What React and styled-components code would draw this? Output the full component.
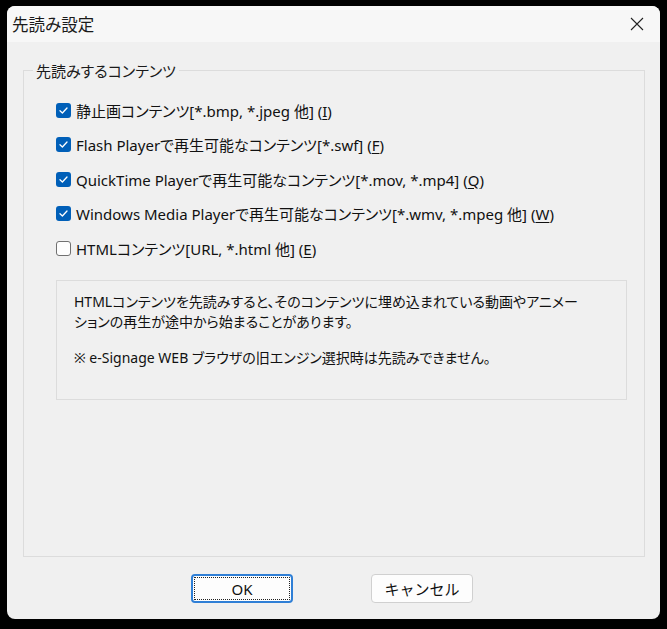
import React from 'react'
import styled, { createGlobalStyle } from 'styled-components'

const GlobalStyle = createGlobalStyle`
  html, body {
    margin: 0;
    padding: 0;
    background: #000;
  }
  body {
    font-family: "Noto Sans", "Noto Sans CJK JP", sans-serif;
    font-feature-settings: "palt";
  }
`

const Screen = styled.div`
  width: 667px;
  height: 629px;
  padding: 6px 7px 10px 7px;
  box-sizing: border-box;
`

const Window = styled.div`
  height: 100%;
  background: #f0f0f0;
  border-radius: 8px;
  display: flex;
  flex-direction: column;
  overflow: hidden;
`

const TitleBar = styled.div`
  height: 36px;
  display: flex;
  align-items: center;
  justify-content: space-between;
  padding: 0 14px 0 5px;
  background: #f7f7f7;
`

const Title = styled.span`
  font-size: 16.5px;
  color: #1a1a1a;
`

const CloseButton = styled.button`
  border: none;
  background: none;
  padding: 0;
  width: 18px;
  height: 18px;
  display: flex;
  align-items: center;
  justify-content: center;
`

const Body = styled.div`
  flex: 1;
  display: flex;
  flex-direction: column;
  padding: 18px 15px 16px 16px;
`

const Group = styled.fieldset`
  flex: 1;
  margin: 0;
  border: 1px solid #dcdcdc;
  padding: 12px 17px 0 9px;
  display: flex;
  flex-direction: column;
  min-height: 0;
`

const Legend = styled.legend`
  font-size: 15px;
  color: #1a1a1a;
  padding: 0 3px;
`

const Rows = styled.div`
  display: flex;
  flex-direction: column;
  padding-left: 23px;
`

const Row = styled.label`
  height: 34.5px;
  display: flex;
  align-items: center;
  gap: 5px;
  font-size: 15px;
  color: #111;
  white-space: nowrap;
`

const Box = styled.span`
  width: 15px;
  height: 15px;
  box-sizing: border-box;
  border-radius: 3px;
  flex: none;
  display: flex;
  align-items: center;
  justify-content: center;
  background: ${(p) => (p.checked ? '#005fb8' : '#fdfdfd')};
  border: ${(p) => (p.checked ? 'none' : '1px solid #707070')};
`

const Key = styled.span`
  text-decoration: underline;
  text-underline-offset: 2px;
`

const Note = styled.div`
  margin: 14px 0 0 23px;
  height: 120px;
  box-sizing: border-box;
  border: 1px solid #dcdcdc;
  padding: 11px 17px;
  font-size: 14px;
  line-height: 20px;
  color: #111;
  white-space: nowrap;
`

const NoteGap = styled.p`
  margin: 16px 0 0 0;
`

const Buttons = styled.div`
  display: flex;
  justify-content: center;
  gap: 78px;
  padding-top: 17px;
  padding-right: 4px;
`

const Button = styled.button`
  width: 102px;
  height: 29px;
  box-sizing: border-box;
  border-radius: 4px;
  background: #fdfdfd;
  font-family: inherit;
  font-size: 15px;
  color: #111;
  border: ${(p) => (p.primary ? '2px solid #2f7fd6' : '1px solid #d0d0d0')};
  padding: 0;
  display: flex;
  align-items: center;
  justify-content: center;
  position: relative;
  ${(p) =>
    p.primary &&
    `
    &::after {
      content: "";
      position: absolute;
      inset: 1px;
      border: 1px dotted #222;
      border-radius: 1px;
    }
  `}
`

const rows = [
  { checked: true, text: '静止画コンテンツ[*.bmp, *.jpeg 他] ', key: 'I' },
  { checked: true, text: 'Flash Playerで再生可能なコンテンツ[*.swf] ', key: 'F' },
  { checked: true, text: 'QuickTime Playerで再生可能なコンテンツ[*.mov, *.mp4] ', key: 'Q' },
  { checked: true, text: 'Windows Media Playerで再生可能なコンテンツ[*.wmv, *.mpeg 他] ', key: 'W' },
  { checked: false, text: 'HTMLコンテンツ[URL, *.html 他] ', key: 'E' },
]

function Check() {
  return (
    <svg width="11" height="11" viewBox="0 0 11 11">
      <path d="M2 5.8 L4.4 8 L9 3" fill="none" stroke="#fff" strokeWidth="1.3" strokeLinecap="round" strokeLinejoin="round" />
    </svg>
  )
}

export default function App() {
  return (
    <>
      <GlobalStyle />
      <Screen>
        <Window>
          <TitleBar>
            <Title>先読み設定</Title>
            <CloseButton aria-label="閉じる">
              <svg width="14" height="14" viewBox="0 0 14 14">
                <path d="M1 1 L13 13 M13 1 L1 13" stroke="#222" strokeWidth="1.1" />
              </svg>
            </CloseButton>
          </TitleBar>
          <Body>
            <Group>
              <Legend>先読みするコンテンツ</Legend>
              <Rows>
                {rows.map((r) => (
                  <Row key={r.key}>
                    <Box checked={r.checked}>{r.checked && <Check />}</Box>
                    <span>
                      {r.text}(<Key>{r.key}</Key>)
                    </span>
                  </Row>
                ))}
              </Rows>
              <Note>
                HTMLコンテンツを先読みすると、そのコンテンツに埋め込まれている動画やアニメー
                <br />
                ションの再生が途中から始まることがあります。
                <NoteGap>※ e-Signage WEB ブラウザの旧エンジン選択時は先読みできません。</NoteGap>
              </Note>
            </Group>
            <Buttons>
              <Button primary>OK</Button>
              <Button>キャンセル</Button>
            </Buttons>
          </Body>
        </Window>
      </Screen>
    </>
  )
}
